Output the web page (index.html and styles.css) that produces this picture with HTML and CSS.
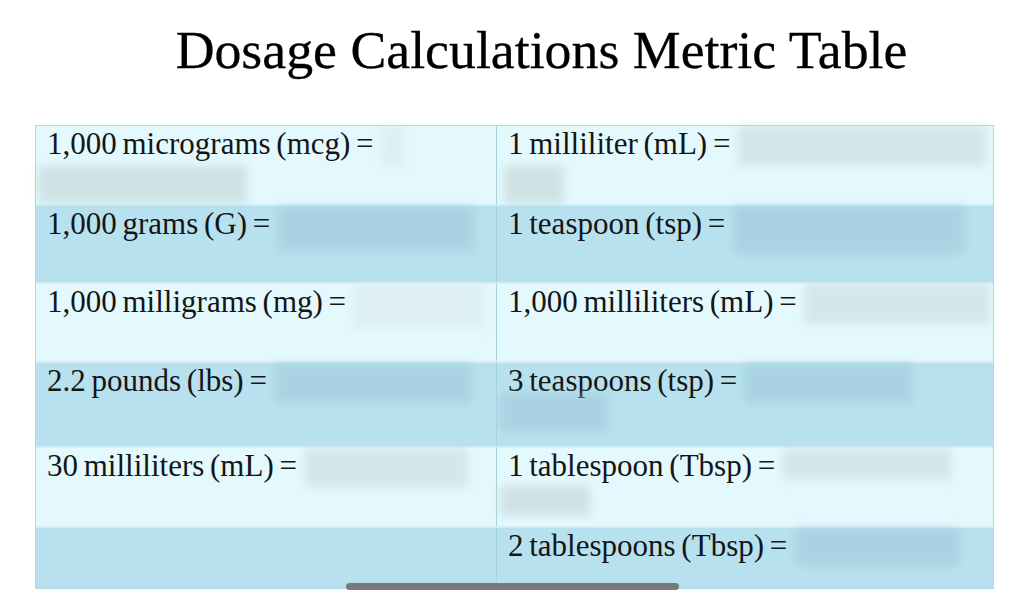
FILE: index.html
```html
<!DOCTYPE html>
<html>
<head>
<meta charset="utf-8">
<link rel="stylesheet" href="styles.css">
</head>
<body>
<div class="page">
  <h1 class="title">Dosage Calculations Metric Table</h1>
  <div class="table">
    <div class="row light r1">
      <div class="cell">1,000 micrograms (mcg) =<span class="blank faint" style="width:22px"></span><div class="blank2" style="width:209px;margin-left:-9px"></div></div>
      <div class="cell right">1 milliliter (mL) =<span class="blank" style="width:248px"></span><div class="blank2" style="width:60px;margin-left:-4px"></div></div>
    </div>
    <div class="row dark r2">
      <div class="cell">1,000 grams (G) =<span class="blank" style="width:196px;height:45px"></span></div>
      <div class="cell right">1 teaspoon (tsp) =<span class="blank" style="width:232px;height:48px"></span></div>
    </div>
    <div class="row light r3">
      <div class="cell">1,000 milligrams (mg) =<span class="blank faint" style="width:130px;height:44px"></span></div>
      <div class="cell right">1,000 milliliters (mL) =<span class="blank" style="width:185px;height:40px"></span></div>
    </div>
    <div class="row dark r4">
      <div class="cell">2.2 pounds (lbs) =<span class="blank" style="width:196px;height:40px"></span></div>
      <div class="cell right">3 teaspoons (tsp) =<span class="blank" style="width:167px;height:40px"></span><div class="blank2" style="width:108px;margin-left:-8px;margin-top:-10px"></div></div>
    </div>
    <div class="row light r5">
      <div class="cell">30 milliliters (mL) =<span class="blank" style="width:163px;height:39px"></span></div>
      <div class="cell right">1 tablespoon (Tbsp) =<span class="blank" style="width:168px;height:32px"></span><div class="blank2" style="width:90px;height:30px;margin-left:-8px;margin-top:2px"></div></div>
    </div>
    <div class="row dark r6">
      <div class="cell"></div>
      <div class="cell right">2 tablespoons (Tbsp) =<span class="blank" style="width:164px;height:38px"></span></div>
    </div>
    <div class="scrollbar"></div>
  </div>
</div>
</body>
</html>
```

FILE: styles.css
```css
html, body {
  margin: 0;
  padding: 0;
  background: #ffffff;
  width: 1024px;
  height: 600px;
  overflow: hidden;
}
.page {
  font-family: "Liberation Serif", "Times New Roman", serif;
  color: #0c0c0c;
  padding-top: 20px;
}
.title {
  margin: 0;
  font-weight: normal;
  font-size: 53.8px;
  line-height: 60px;
  text-align: center;
  padding-left: 59px;
  letter-spacing: 0;
  color: #000;
  -webkit-text-stroke: 0.3px #000;
}
.table {
  position: relative;
  margin: 45px 0 0 35px;
  width: 957px;
  border: 1px solid #b2d8e3;
}
.row {
  display: grid;
  grid-template-columns: 460px 1fr;
  border-top: 2px solid #d2eef5;
}
.row:first-child { border-top: none; }
.light { background: #e4f9fd; }
.dark { background: #b8e1ef; }
.r1 { height: 78px; }
.r2 { height: 76px; }
.r3 { height: 77px; }
.r4 { height: 83px; }
.r5 { height: 78px; }
.r6 { height: 60px; }
.cell {
  font-size: 31px;
  line-height: 36px;
  padding: 0 0 0 11px;
  letter-spacing: 0;
  word-spacing: -2px;
  white-space: nowrap;
  color: #151515;
}
.right {
  border-left: 1px solid #a9d2df;
  padding-left: 11px;
}
.blank {
  display: inline-block;
  height: 40px;
  vertical-align: top;
  margin-left: 8px;
  background: rgba(195, 215, 218, 0.5);
  filter: blur(4px);
}
.dark .blank {
  background: rgba(150, 195, 210, 0.45);
}
.blank.faint {
  background: rgba(215, 232, 235, 0.55);
}
.blank2 {
  height: 38px;
  background: rgba(190, 210, 212, 0.55);
  filter: blur(4px);
}
.dark .blank2 {
  background: rgba(150, 195, 210, 0.45);
}
.scrollbar {
  position: absolute;
  left: 310px;
  bottom: -2px;
  width: 333px;
  height: 7px;
  border-radius: 4px;
  background: #7a7a7a;
}
```
